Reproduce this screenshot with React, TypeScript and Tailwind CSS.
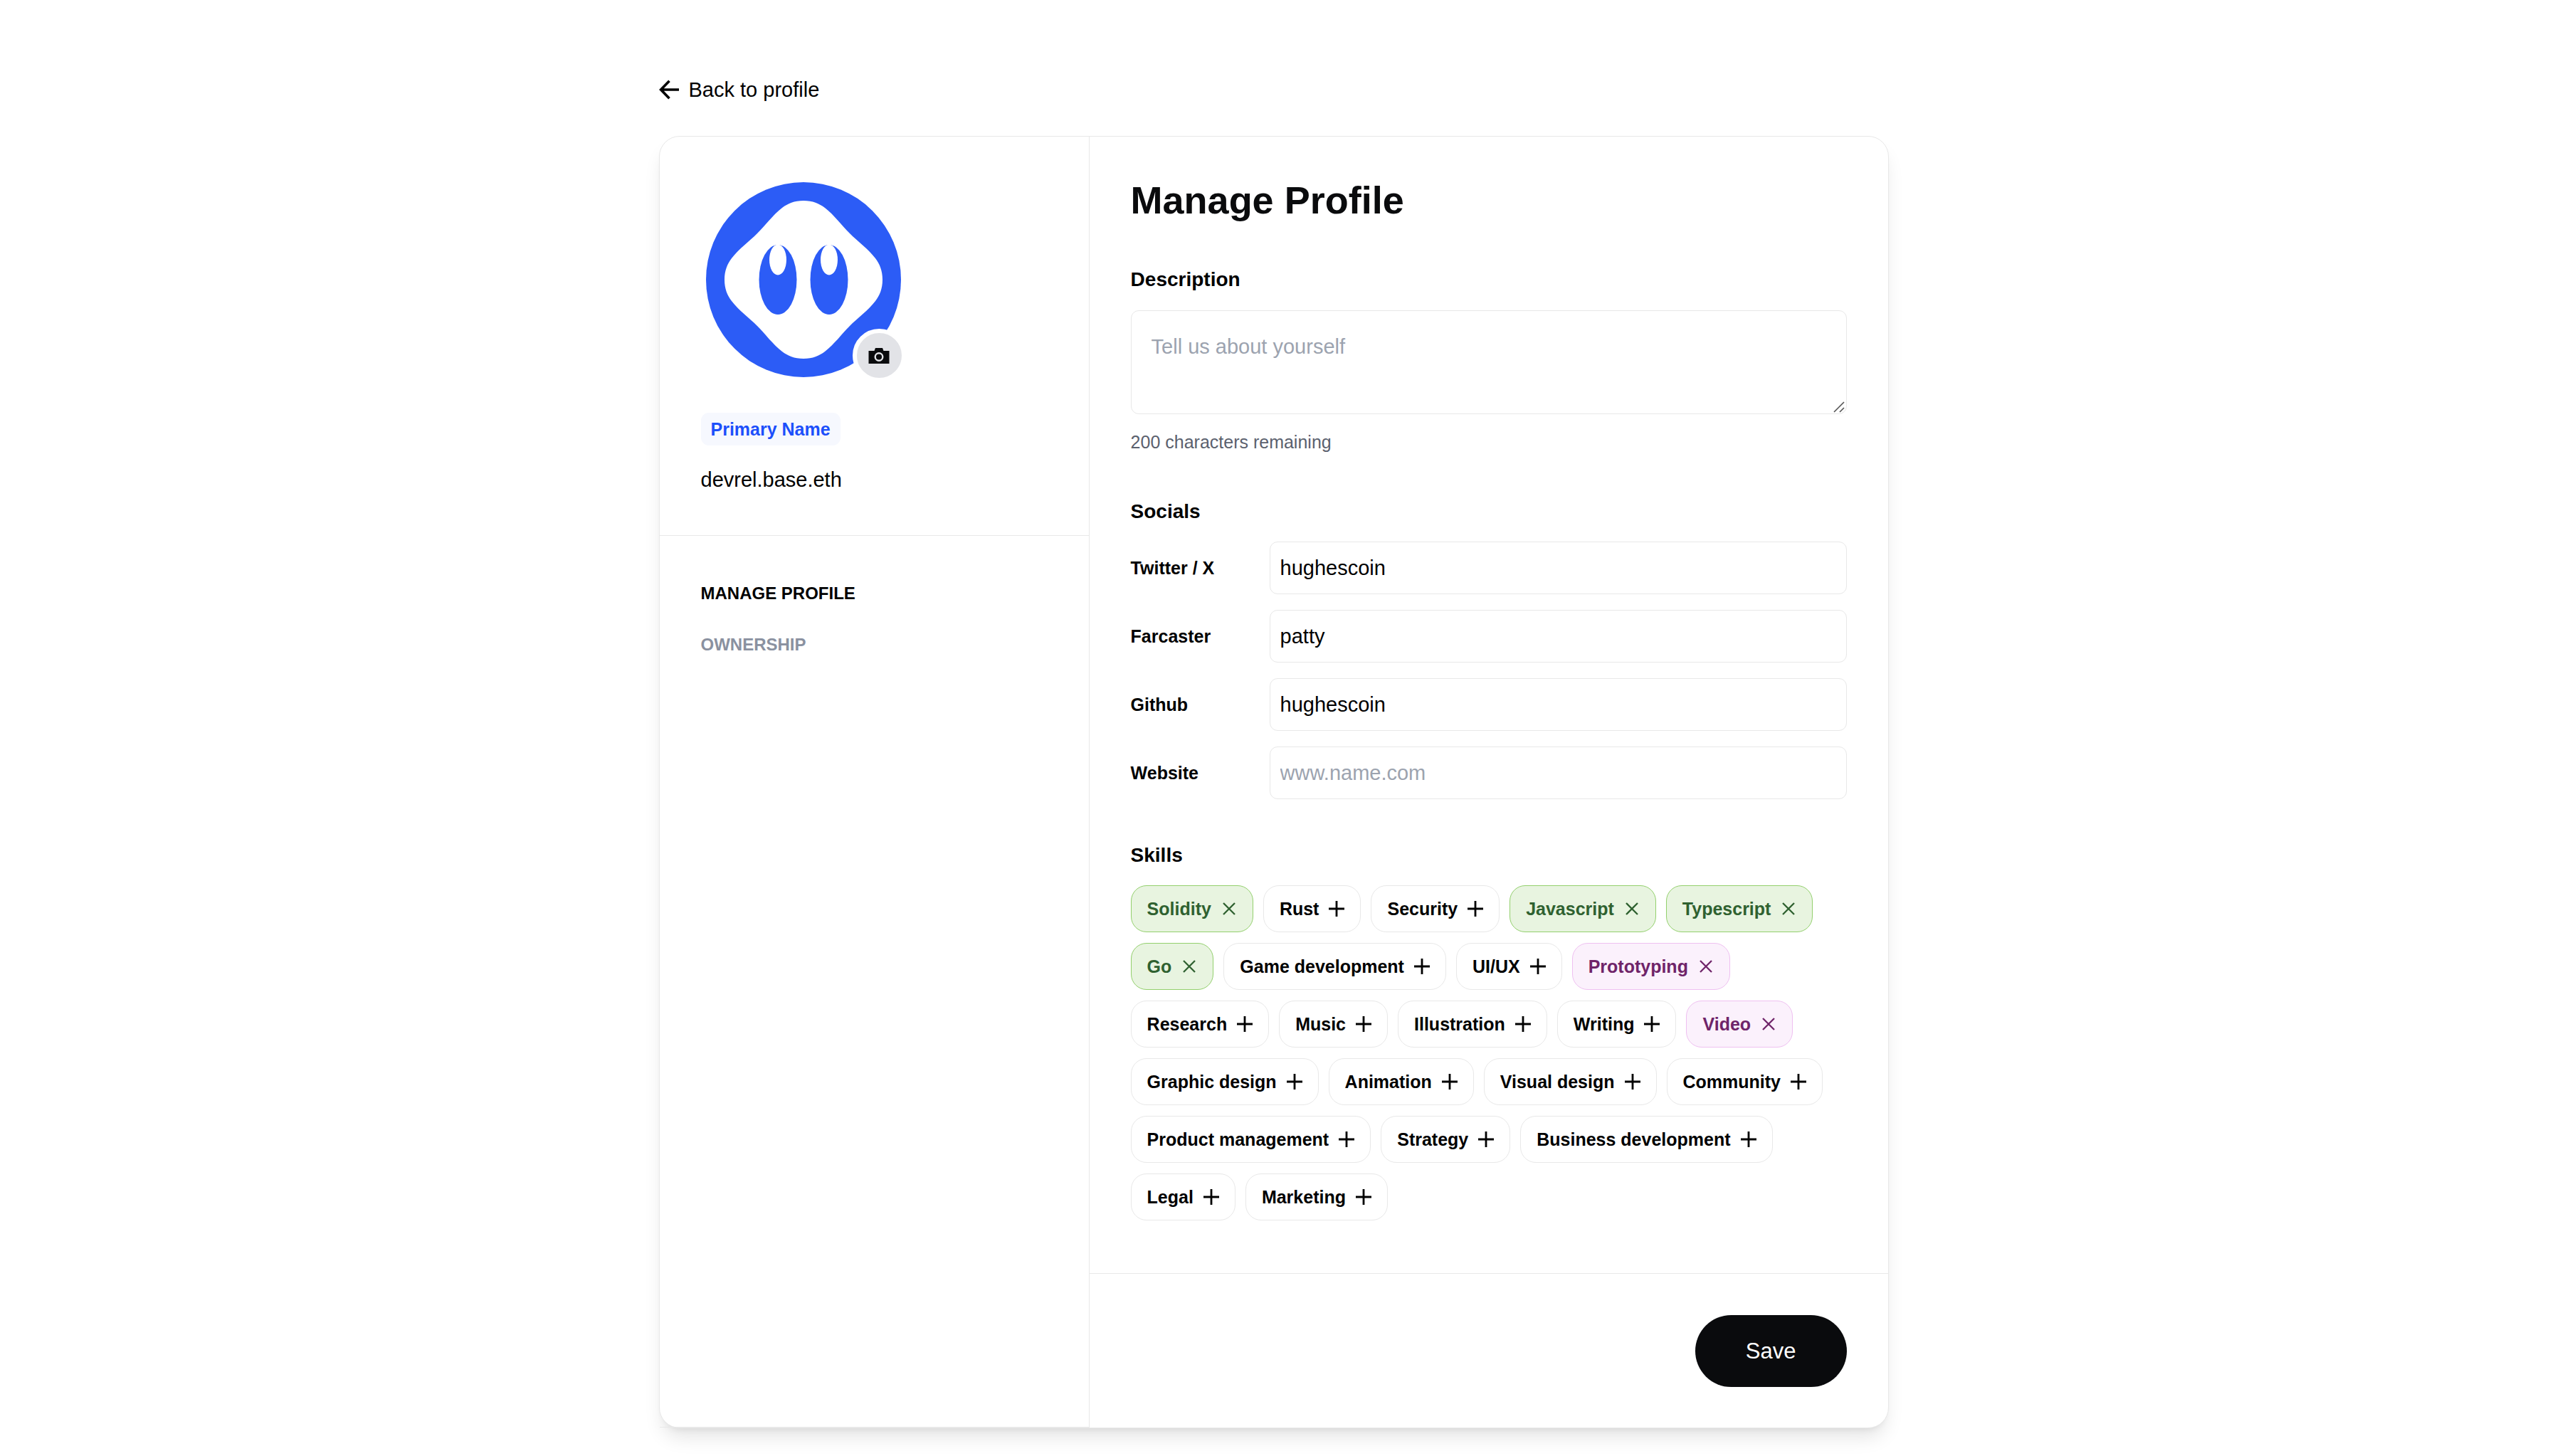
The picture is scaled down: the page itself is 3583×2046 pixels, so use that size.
import { useState } from "react";
import type { ReactNode } from "react";

type Tone = "green" | "pink";

const SKILLS: { name: string; tone?: Tone }[] = [
  { name: "Solidity", tone: "green" },
  { name: "Rust" },
  { name: "Security" },
  { name: "Javascript", tone: "green" },
  { name: "Typescript", tone: "green" },
  { name: "Go", tone: "green" },
  { name: "Game development" },
  { name: "UI/UX" },
  { name: "Prototyping", tone: "pink" },
  { name: "Research" },
  { name: "Music" },
  { name: "Illustration" },
  { name: "Writing" },
  { name: "Video", tone: "pink" },
  { name: "Graphic design" },
  { name: "Animation" },
  { name: "Visual design" },
  { name: "Community" },
  { name: "Product management" },
  { name: "Strategy" },
  { name: "Business development" },
  { name: "Legal" },
  { name: "Marketing" },
];

const SOCIALS = [
  { id: "twitter", label: "Twitter / X", value: "hughescoin", placeholder: "Username" },
  { id: "farcaster", label: "Farcaster", value: "patty", placeholder: "Username" },
  { id: "github", label: "Github", value: "hughescoin", placeholder: "Username" },
  { id: "website", label: "Website", value: "", placeholder: "www.name.com" },
];

const TONES = {
  green: "border-[#93d06d] bg-[#e8f4e0] text-[#2f6130]",
  pink: "border-[#efc0f1] bg-[#fbf1fc] text-[#6f2469]",
  plain: "border-[#e8e8e8] bg-transparent text-black",
};

function ArrowLeft() {
  return (
    <svg viewBox="0 0 28 28" className="size-7" fill="none" stroke="currentColor" strokeWidth="3.6" aria-hidden="true">
      <path d="M28 14H3M14.5 1.8L2.6 14l11.9 12.2" />
    </svg>
  );
}

function Avatar() {
  return (
    <svg viewBox="0 0 274 274" className="size-full" role="img" aria-label="Profile avatar">
      <circle cx="137" cy="137" r="137" fill="#2c5cf6" />
      <path
        transform="translate(26 26)"
        fill="#fff"
        d="M111 0C124 0 133 4 141 10C154 20 165 35 176 46C187 57 202 68 212 81C218 89 222 98 222 111C222 124 218 133 212 141C202 154 187 165 176 176C165 187 154 202 141 212C133 218 124 222 111 222C98 222 89 218 81 212C68 202 57 187 46 176C35 165 20 154 10 141C4 133 0 124 0 111C0 98 4 89 10 81C20 68 35 57 46 46C57 35 68 20 81 10C89 4 98 0 111 0Z"
      />
      <g fill="#2c5cf6">
        <ellipse cx="101" cy="137" rx="26.5" ry="49" />
        <ellipse cx="173" cy="137" rx="26.5" ry="49" />
      </g>
      <g fill="#fff">
        <ellipse cx="101" cy="109" rx="12" ry="21.5" />
        <ellipse cx="173" cy="109" rx="12" ry="21.5" />
      </g>
    </svg>
  );
}

function Camera() {
  return (
    <svg viewBox="0 0 30 24" className="h-6 w-[30px]" aria-hidden="true">
      <path d="M.5 5h8l1.500-4h10l1.500 4h8v18H.5z" fill="#0a0b0d" />
      <circle cx="15" cy="13.500" r="5.300" fill="none" stroke="#e2e3e7" strokeWidth="2.400" />
    </svg>
  );
}

function ChipIcon({ selected }: { selected: boolean }) {
  return (
    <svg viewBox="0 0 22 22" className="size-[22px] shrink-0" fill="none" stroke="currentColor" strokeWidth="2.800" aria-hidden="true">
      {selected ? <path d="M3 3l16 16M19 3l-16 16" strokeWidth="2.300" /> : <path d="M11 0v22M0 11h22" />}
    </svg>
  );
}

function SectionTitle({ children }: { children: ReactNode }) {
  return <h2 className="text-[28px] leading-8 font-bold">{children}</h2>;
}

export default function App() {
  const [about, setAbout] = useState("");
  const [socials, setSocials] = useState<Record<string, string>>(
    Object.fromEntries(SOCIALS.map((s) => [s.id, s.value])),
  );

  return (
    <main className="bg-white pr-1 pb-10 font-['Liberation_Sans',Arial,sans-serif] text-black">
      <div className="mx-auto max-w-[1728px] pt-[110px]">
        <a href="#profile" className="inline-flex items-center gap-[14px] align-top text-[29px] leading-8">
          <ArrowLeft />
          Back to profile
        </a>

        <div className="mt-[49px] flex rounded-[29px] border border-[#e8e8e8] bg-white shadow-[0_18px_27px_-5px_rgba(0,0,0,0.1),0_7px_11px_-7px_rgba(0,0,0,0.1)]">
          <aside className="flex w-[35%] shrink-0 flex-col border-r border-[#e8e8e8]">
            <div className="flex flex-col items-start border-b border-[#e8e8e8] px-[58px] pt-[57px] pb-[62px]">
              <div className="relative size-72 p-[7px]">
                <Avatar />
                <button
                  type="button"
                  aria-label="Change avatar"
                  className="absolute right-0 bottom-0 flex size-[75px] items-center justify-center rounded-full border-[6px] border-white bg-[#e2e3e7]"
                >
                  <Camera />
                </button>
              </div>
              <span className="mt-[43px] rounded-[11px] bg-[#f6f8fe] px-[14px] text-[25px] leading-[46px] font-bold text-[#1c4ffb]">
                Primary Name
              </span>
              <p className="mt-8 text-[29px] leading-8">devrel.base.eth</p>
            </div>
            <nav className="flex flex-1 flex-col items-start gap-11 border-b border-[#e8e8e8] px-[58px] pt-[67px] text-[24px] leading-7 font-bold">
              <button type="button">MANAGE PROFILE</button>
              <button type="button" className="text-[#8a91a0]">
                OWNERSHIP
              </button>
            </nav>
          </aside>

          <form className="min-w-0 flex-1" onSubmit={(e) => e.preventDefault()}>
            <div className="px-[58px] pt-[57px] pb-[74px]">
              <h1 className="text-[54px] leading-[64px] font-bold text-[#0a0b0d]">Manage Profile</h1>

              <label htmlFor="about" className="mt-16 block text-[28px] leading-8 font-bold">
                Description
              </label>
              <div className="relative mt-[27px]">
                <textarea
                  id="about"
                  maxLength={200}
                  value={about}
                  onChange={(e) => setAbout(e.target.value)}
                  placeholder="Tell us about yourself"
                  className="block h-[146px] w-full resize-y rounded-[11px] border border-[#e8e8e8] bg-transparent px-7 py-[34px] text-[29px] leading-8 placeholder:text-[#9ca3af] [&::-webkit-resizer]:bg-transparent"
                />
                <svg
                  viewBox="0 0 16 16"
                  className="pointer-events-none absolute right-[3px] bottom-[2px] size-4"
                  stroke="#555"
                  strokeWidth="1.600"
                  aria-hidden="true"
                >
                  <path d="M1 15L15 1M9 15L15 9" />
                </svg>
              </div>
              <p className="mt-[25px] text-[25px] leading-7 text-[#5b616e]">{200 - about.length} characters remaining</p>

              <div className="mt-[68px]">
                <SectionTitle>Socials</SectionTitle>
              </div>
              <div className="mt-[26px] flex flex-col gap-[22px]">
                {SOCIALS.map((s) => (
                  <div key={s.id} className="flex items-center">
                    <label htmlFor={s.id} className="w-[195px] shrink-0 text-[25px] leading-7 font-bold">
                      {s.label}
                    </label>
                    <input
                      id={s.id}
                      type="text"
                      value={socials[s.id]}
                      placeholder={s.placeholder}
                      onChange={(e) => setSocials({ ...socials, [s.id]: e.target.value })}
                      className="h-[74px] min-w-0 flex-1 rounded-[11px] border border-[#e8e8e8] bg-transparent px-[14px] text-[29px] leading-8 placeholder:text-[#9ca3af]"
                    />
                  </div>
                ))}
              </div>

              <div className="mt-[63px]">
                <SectionTitle>Skills</SectionTitle>
              </div>
              <div className="mt-[26px] flex flex-wrap gap-x-[14px] gap-y-[15px]">
                {SKILLS.map((skill) => (
                  <button
                    key={skill.name}
                    type="button"
                    aria-pressed={Boolean(skill.tone)}
                    className={`flex h-[66px] items-center gap-[14px] rounded-[22px] border px-[22px] text-[25px] leading-7 font-bold ${TONES[skill.tone ?? "plain"]}`}
                  >
                    {skill.name}
                    <ChipIcon selected={Boolean(skill.tone)} />
                  </button>
                ))}
              </div>
            </div>

            <div className="flex justify-end border-t border-[#e8e8e8] px-[58px] pt-[58px] pb-[57px]">
              <button
                type="submit"
                className="h-[101px] rounded-full bg-[#0a0b0d] px-[71px] text-[31px] leading-9 text-white"
              >
                Save
              </button>
            </div>
          </form>
        </div>
      </div>
    </main>
  );
}
